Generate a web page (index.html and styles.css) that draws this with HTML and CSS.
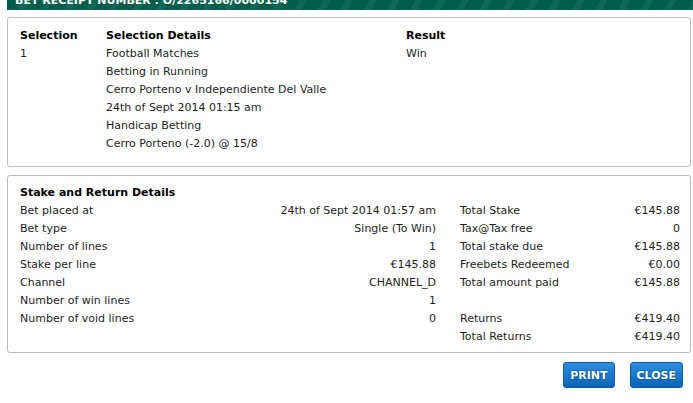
FILE: index.html
```html
<!DOCTYPE html>
<html lang="en">
<head>
    <meta charset="UTF-8">
    <title>Bet Receipt</title>
    <link rel="stylesheet" href="styles.css">
</head>
<body>
    <div class="receipt">
        <header class="receipt-head">
            <h1>BET RECEIPT NUMBER : O/2265166/0000154</h1>
        </header>

        <div class="panel selection">
            <div class="sel-grid">
                <div class="th">Selection</div>
                <div class="th">Selection Details</div>
                <div class="th">Result</div>
                <div>1</div>
                <div class="details">
                    <div>Football Matches</div>
                    <div>Betting in Running</div>
                    <div>Cerro Porteno v Independiente Del Valle</div>
                    <div>24th of Sept 2014 01:15 am</div>
                    <div>Handicap Betting</div>
                    <div>Cerro Porteno (-2.0) @ 15/8</div>
                </div>
                <div>Win</div>
            </div>
        </div>

        <div class="panel stake">
            <div class="stake-grid">
                <div class="th title">Stake and Return Details</div>
                <div></div><div></div><div></div>

                <div>Bet placed at</div><div class="num">24th of Sept 2014 01:57 am</div>
                <div>Total Stake</div><div class="num">€145.88</div>

                <div>Bet type</div><div class="num">Single (To Win)</div>
                <div>Tax@Tax free</div><div class="num">0</div>

                <div>Number of lines</div><div class="num">1</div>
                <div>Total stake due</div><div class="num">€145.88</div>

                <div>Stake per line</div><div class="num">€145.88</div>
                <div>Freebets Redeemed</div><div class="num">€0.00</div>

                <div>Channel</div><div class="num">CHANNEL_D</div>
                <div>Total amount paid</div><div class="num">€145.88</div>

                <div>Number of win lines</div><div class="num">1</div>
                <div></div><div></div>

                <div>Number of void lines</div><div class="num">0</div>
                <div>Returns</div><div class="num">€419.40</div>

                <div></div><div></div>
                <div>Total Returns</div><div class="num">€419.40</div>
            </div>
        </div>

        <div class="actions">
            <button class="btn">PRINT</button>
            <button class="btn">CLOSE</button>
        </div>
    </div>
</body>
</html>
```

FILE: styles.css
```css
body {
    margin: 0;
    background: #fff;
    font-family: "DejaVu Sans", Tahoma, sans-serif;
    font-size: 11px;
    color: #1c1c1c;
}

.receipt {
    padding-left: 7px;
}

.receipt-head {
    height: 10px;
    overflow: hidden;
    background-color: #005e4b;
    background-image: repeating-linear-gradient(120deg, rgba(255,255,255,0) 0, rgba(255,255,255,0) 14px, rgba(255,255,255,0.06) 14px, rgba(255,255,255,0.06) 20px);
}

.receipt-head h1 {
    margin: -6px 0 0 8px;
    font-size: 11px;
    line-height: 14px;
    font-weight: bold;
    color: #fff;
    white-space: nowrap;
}

.panel {
    margin-right: 2px;
    border: 1px solid #bcbcbc;
    border-radius: 3px;
    box-sizing: border-box;
}

.selection {
    margin-top: 7px;
    height: 150px;
    padding: 9px 12px 0;
}

.sel-grid {
    display: grid;
    grid-template-columns: 86px 300px 1fr;
    line-height: 18px;
}

.th {
    font-weight: bold;
    color: #000;
}

.stake {
    margin-top: 8px;
    height: 178px;
    padding: 8px 10px 0 12px;
}

.stake-grid {
    display: grid;
    grid-template-columns: 160px 256px 174px 70px;
    grid-auto-rows: 18px;
    line-height: 18px;
}

.stake-grid > :nth-child(4n+3) {
    padding-left: 24px;
}

.title {
    white-space: nowrap;
}

.num {
    text-align: right;
}

.actions {
    display: flex;
    justify-content: flex-end;
    gap: 15px;
    margin-top: 9px;
    padding-right: 10px;
}

.btn {
    height: 26px;
    padding: 0 6px;
    border: 1px solid #0b5aa8;
    border-radius: 3px;
    background: linear-gradient(#2d8fdc, #0b63b6);
    color: #fff;
    font-family: "DejaVu Sans", Tahoma, sans-serif;
    font-size: 11px;
    font-weight: bold;
    text-shadow: 0 0 2px #0a3d70;
}
```
